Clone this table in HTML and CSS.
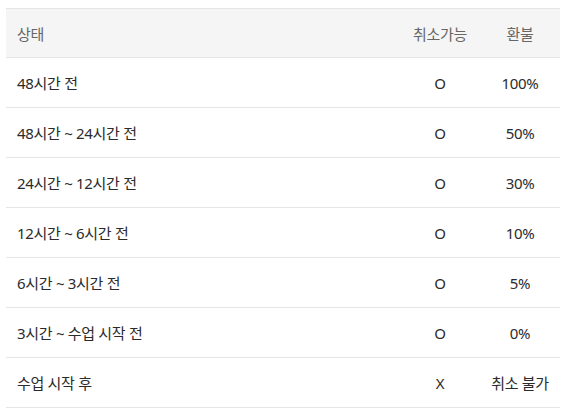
FILE: index.html
```html
<!DOCTYPE html>
<html lang="ko">
<head>
<meta charset="utf-8">
<link rel="stylesheet" href="styles.css">
</head>
<body>
<div class="wrap">
<table class="refund">
  <colgroup>
    <col class="c-state">
    <col class="c-cancel">
    <col class="c-refund">
  </colgroup>
  <thead>
    <tr><th class="left">상태</th><th>취소가능</th><th>환불</th></tr>
  </thead>
  <tbody>
    <tr><td class="left">48시간 전</td><td>O</td><td>100%</td></tr>
    <tr><td class="left">48시간 ~ 24시간 전</td><td>O</td><td>50%</td></tr>
    <tr><td class="left">24시간 ~ 12시간 전</td><td>O</td><td>30%</td></tr>
    <tr><td class="left">12시간 ~ 6시간 전</td><td>O</td><td>10%</td></tr>
    <tr><td class="left">6시간 ~ 3시간 전</td><td>O</td><td>5%</td></tr>
    <tr><td class="left">3시간 ~ 수업 시작 전</td><td>O</td><td>0%</td></tr>
    <tr><td class="left">수업 시작 후</td><td>X</td><td>취소 불가</td></tr>
  </tbody>
</table>
</div>
</body>
</html>
```
FILE: styles.css
```css
html, body {
  margin: 0;
  padding: 0;
  background: #ffffff;
}
body {
  font-family: "Noto Sans", "Noto Sans CJK KR", sans-serif;
  font-size: 15px;
  color: #2b2b2b;
}
.wrap {
  padding: 8px 9px 0 6px;
}
.refund {
  width: 554px;
  border-collapse: collapse;
  table-layout: fixed;
}
.c-cancel, .c-refund {
  width: 80px;
}
.refund th, .refund td {
  text-align: center;
  font-weight: 400;
  padding: 0;
  border-bottom: 1px solid #e6e6e6;
  letter-spacing: -0.3px;
}
.refund thead th {
  background: #f5f5f5;
  color: #666666;
  height: 48px;
  border-top: 1px solid #e6e6e6;
}
.refund tbody td {
  height: 49px;
}
.refund .left {
  text-align: left;
  padding-left: 11px;
}
```
